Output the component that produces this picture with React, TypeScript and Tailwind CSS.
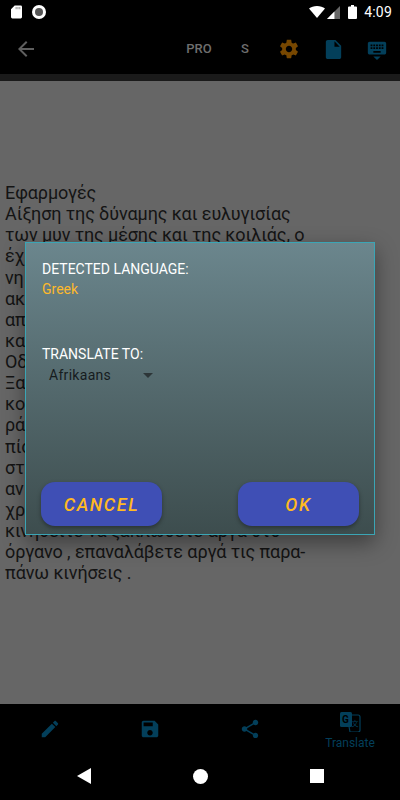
// Translate dialog over a dimmed reader page. Toolbar and bottom bar are
// dimmed too, so the icon colours below are the already-darkened ones.
// Lines behind the dialog only keep the letters that stick out on the left.
const BODY_LINES = [
  'Εφαρμογές',
  'Αίξηση της δύναμης και ευλυγισίας',
  'των μυν της μέσης και της κοιλιάς, ο',
  'έχ',
  'νη',
  'ακ',
  'απ',
  'κα',
  'Οδ',
  'Ξα',
  'κο',
  'ρά',
  'πίσ',
  'στ',
  'αν',
  'χρ',
  'κινηθείτε να ξαπλώσετε αργά στο',
  'όργανο , επαναλάβετε αργά τις παρα-',
  'πάνω κινήσεις .',
];

function Icon({ d, className }: { d: string; className: string }) {
  return (
    <svg viewBox="0 0 24 24" className={className} fill="currentColor">
      <path d={d} />
    </svg>
  );
}

const ICONS = {
  back: 'M20 11H7.83l5.59-5.59L12 4l-8 8 8 8 1.41-1.41L7.83 13H20v-2z',
  gear: 'M19.43 12.98c.04-.32.07-.64.07-.98s-.03-.66-.07-.98l2.11-1.65c.19-.15.24-.42.12-.64l-2-3.46c-.12-.22-.39-.3-.61-.22l-2.49 1c-.52-.4-1.08-.73-1.69-.98l-.38-2.65C14.46 2.18 14.25 2 14 2h-4c-.25 0-.46.18-.49.42l-.38 2.65c-.61.25-1.17.59-1.69.98l-2.49-1c-.23-.09-.49 0-.61.22l-2 3.46c-.13.22-.07.49.12.64l2.11 1.65c-.04.32-.07.65-.07.98s.03.66.07.98l-2.11 1.65c-.19.15-.24.42-.12.64l2 3.46c.12.22.39.3.61.22l2.49-1c.52.4 1.08.73 1.69.98l.38 2.65c.03.24.24.42.49.42h4c.25 0 .46-.18.49-.42l.38-2.65c.61-.25 1.17-.59 1.69-.98l2.49 1c.23.09.49 0 .61-.22l2-3.46c.12-.22.07-.49-.12-.64l-2.11-1.65zM12 15.5c-1.93 0-3.5-1.57-3.5-3.5s1.57-3.5 3.5-3.5 3.5 1.57 3.5 3.5-1.57 3.5-3.5 3.5z',
  file: 'M6 2c-1.1 0-1.99.9-1.99 2L4 20c0 1.1.89 2 1.99 2H18c1.1 0 2-.9 2-2V8l-6-6H6zm7 7V3.5L18.5 9H13z',
  keyboard:
    'M20 3H4c-1.1 0-1.99.9-1.99 2L2 15c0 1.1.9 2 2 2h16c1.1 0 2-.9 2-2V5c0-1.1-.9-2-2-2zm-9 3h2v2h-2V6zm0 3h2v2h-2V9zM8 6h2v2H8V6zm0 3h2v2H8V9zm-1 2H5V9h2v2zm0-3H5V6h2v2zm9 7H8v-2h8v2zm0-4h-2V9h2v2zm0-3h-2V6h2v2zm3 3h-2V9h2v2zm0-3h-2V6h2v2zm-7 15l4-4H8l4 4z',
  edit: 'M3 17.25V21h3.75L17.81 9.94l-3.75-3.75L3 17.25zM20.71 7.04c.39-.39.39-1.02 0-1.41l-2.34-2.34c-.39-.39-1.02-.39-1.41 0l-1.83 1.83 3.75 3.75 1.83-1.83z',
  save: 'M17 3H5c-1.11 0-2 .9-2 2v14c0 1.1.89 2 2 2h14c1.1 0 2-.9 2-2V7l-4-4zm-5 16c-1.66 0-3-1.34-3-3s1.34-3 3-3 3 1.34 3 3-1.34 3-3 3zm3-10H5V5h10v4z',
  share:
    'M18 16.08c-.76 0-1.44.3-1.96.77L8.91 12.7c.05-.23.09-.46.09-.7s-.04-.47-.09-.7l7.05-4.11c.54.5 1.25.81 2.04.81 1.66 0 3-1.34 3-3s-1.34-3-3-3-3 1.34-3 3c0 .24.04.47.09.7L8.04 9.81C7.5 9.31 6.79 9 6 9c-1.66 0-3 1.34-3 3s1.34 3 3 3c.79 0 1.5-.31 2.04-.81l7.12 4.16c-.05.21-.08.43-.08.65 0 1.61 1.31 2.92 2.92 2.92 1.61 0 2.92-1.31 2.92-2.92s-1.31-2.92-2.92-2.92z',
};

function StatusBar() {
  return (
    <div className="flex h-6 items-center justify-between bg-black pl-[11px] pr-[8px] text-white">
      <div className="flex items-center gap-[10px]">
        <svg viewBox="0 0 12 14" className="h-[14px] w-[11px]" fill="currentColor">
          <path d="M4 0h6.500A1.500 1.500 0 0 1 12 1.500v11a1.500 1.500 0 0 1-1.500 1.500h-9A1.500 1.500 0 0 1 0 12.500V4z" />
          <rect x="5" y="1.500" width="1.200" height="2.500" fill="#999" />
          <rect x="7" y="1.500" width="1.200" height="2.500" fill="#999" />
          <rect x="9" y="1.500" width="1.200" height="2.500" fill="#999" />
        </svg>
        <svg viewBox="0 0 14 14" className="h-[14px] w-[14px]">
          <circle cx="7" cy="7" r="7" fill="#fff" />
          <circle cx="7" cy="7" r="4" fill="#555" />
        </svg>
      </div>
      <div className="flex items-center">
        <svg viewBox="0 0 16 12" className="h-[12px] w-[16px]" fill="currentColor">
          <path d="M8 12 0 2.500C2 .9 4.800 0 8 0s6 .9 8 2.500z" />
        </svg>
        <svg viewBox="0 0 14 14" className="ml-[2px] h-[13px] w-[13px]">
          <path d="M14 0v14H0z" fill="#666" />
          <path d="M8 6v8H0z" fill="#fff" />
        </svg>
        <svg viewBox="0 0 9 14" className="ml-[8px] h-[14px] w-[9px]" fill="currentColor">
          <path d="M3 0h3v1.500h2a1 1 0 0 1 1 1V13a1 1 0 0 1-1 1H1a1 1 0 0 1-1-1V2.500a1 1 0 0 1 1-1h2z" />
        </svg>
        <span className="ml-[7px] text-[14px] leading-none tracking-[0.2px]">4:09</span>
      </div>
    </div>
  );
}

function Toolbar() {
  return (
    <div className="flex h-[50px] items-center bg-black">
      <Icon d={ICONS.back} className="ml-[14px] h-6 w-6 text-[#5f5f5f]" />
      <div className="flex-1" />
      <span className="w-[26px] text-center text-[13px] font-medium text-[#6e6e6e]">PRO</span>
      <span className="ml-[28px] w-[10px] text-center text-[13px] font-medium text-[#6e6e6e]">S</span>
      <Icon d={ICONS.gear} className="ml-[28px] h-[22px] w-[22px] text-[#774700]" />
      <Icon d={ICONS.file} className="ml-[22px] h-[23px] w-[23px] text-[#033f5a]" />
      <Icon d={ICONS.keyboard} className="ml-[21px] mr-[12px] mt-[1px] h-[22px] w-[22px] text-[#033f5a]" />
    </div>
  );
}

function TranslateIcon() {
  return (
    <svg viewBox="0 0 22 20" className="h-[20px] w-[22px]">
      <path
        d="M8 3h11a2 2 0 0 1 2 2v13a2 2 0 0 1-2 2h-8z"
        fill="#000"
        stroke="#033f5a"
        strokeWidth="1.200"
      />
      <rect x="1" y="0" width="12" height="15" rx="1.500" fill="#033f5a" />
      <text x="3" y="11" fontSize="10" fontWeight="700" fontFamily="Roboto" fill="#000">
        G
      </text>
      <text x="12.500" y="14" fontSize="7" fontFamily="Noto Sans CJK SC" fill="#033f5a">
        文
      </text>
    </svg>
  );
}

function BottomBar() {
  return (
    <div className="grid h-[48px] grid-cols-4 bg-black text-[#033f5a]">
      <div className="flex items-center justify-center pt-[2px]">
        <Icon d={ICONS.edit} className="h-[22px] w-[22px]" />
      </div>
      <div className="flex items-center justify-center pt-[2px]">
        <Icon d={ICONS.save} className="h-[22px] w-[22px]" />
      </div>
      <div className="flex items-center justify-center pt-[2px]">
        <Icon d={ICONS.share} className="h-[22px] w-[22px]" />
      </div>
      <div className="flex flex-col items-center pt-[8px]">
        <TranslateIcon />
        <span className="mt-[4px] text-[12px] leading-[14px]">Translate</span>
      </div>
    </div>
  );
}

function NavBar() {
  return (
    <div className="grid h-[48px] grid-cols-3 bg-black px-[23px]">
      <div className="flex items-center justify-center">
        <svg viewBox="0 0 14 16" className="ml-[3px] h-[16px] w-[14px]" fill="#fff">
          <path d="M14 0v16L0 8z" />
        </svg>
      </div>
      <div className="flex items-center justify-center">
        <div className="h-[15px] w-[15px] rounded-full bg-white" />
      </div>
      <div className="flex items-center justify-center">
        <div className="mr-[3px] h-[14px] w-[14px] bg-white" />
      </div>
    </div>
  );
}

function DialogButton({ label }: { label: string }) {
  return (
    <button
      type="button"
      className="h-11 w-[121px] rounded-[14px] bg-[#3f4fb5] text-[18px] font-medium italic tracking-[1.6px] text-[#ffb922] shadow-[0_2px_4px_rgba(0,0,0,0.35)]"
    >
      {label}
    </button>
  );
}

function TranslateDialog() {
  return (
    <div className="absolute left-[25px] top-[242px] flex h-[293px] w-[350px] flex-col border border-[#3ba5b5] bg-gradient-to-b from-[#6b868d] to-[#3d4d4e] pl-4 pr-[15px] pt-[16px] shadow-[0_8px_20px_rgba(0,0,0,0.4)]">
      <p className="text-[14px] leading-5 text-white">DETECTED LANGUAGE:</p>
      <p className="text-[14px] leading-5 text-[#fdb92c]">Greek</p>
      <p className="mt-[45px] text-[14px] leading-5 text-white">TRANSLATE TO:</p>
      <div className="mt-[1px] flex items-center pl-[7px]">
        <span className="text-[14px] leading-5 tracking-[0.3px] text-[#161c1e]">Afrikaans</span>
        <span className="ml-[32px] h-0 w-0 border-x-[5px] border-t-[5px] border-x-transparent border-t-[#2d3638]" />
      </div>
      <div className="mt-auto mb-[8px] -ml-px flex justify-between">
        <DialogButton label="CANCEL" />
        <DialogButton label="OK" />
      </div>
    </div>
  );
}

export default function App() {
  return (
    <div className="relative flex h-[800px] w-[400px] flex-col overflow-hidden bg-black font-['Roboto',sans-serif]">
      <StatusBar />
      <Toolbar />
      <div className="h-[7px] bg-[#1a1a1a]" />
      <div className="flex-1 bg-[#666666] pl-[5px] pt-[101px] text-[18px] leading-[21.12px] tracking-[-0.1px] text-[#141414]">
        {BODY_LINES.map((line, i) => (
          <p key={i} className="whitespace-nowrap">
            {line}
          </p>
        ))}
      </div>
      <BottomBar />
      <NavBar />
      <TranslateDialog />
    </div>
  );
}
